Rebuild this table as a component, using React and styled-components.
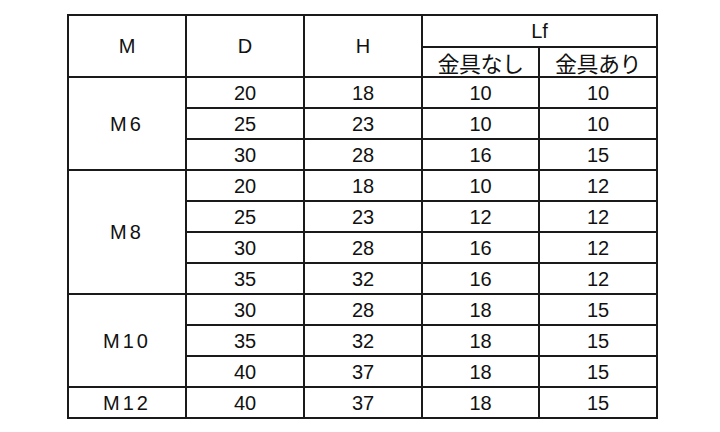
import React from "react";
import styled, { createGlobalStyle } from "styled-components";

const Global = createGlobalStyle`
  html, body {
    margin: 0;
    background: #fff;
  }
`;

const Page = styled.div`
  padding: 14px 0 0 67px;
`;

const Table = styled.table`
  border-collapse: collapse;
  table-layout: fixed;
  width: 591px;
  font-family: "Liberation Sans", "Noto Sans CJK JP", sans-serif;
  font-size: 20px;
  color: #111;
`;

const Cell = styled.td`
  border: 2px solid #1a1a1a;
  text-align: center;
  vertical-align: middle;
  padding: 0;
  height: ${(p) => p.$h || 29}px;
  line-height: 1;
  letter-spacing: ${(p) => (p.$wide ? "3px" : "0")};
`;

const SubHead = styled(Cell)`
  font-family: "Noto Sans CJK JP", sans-serif;
  font-size: 22px;
  letter-spacing: -0.5px;
`;

const groups = [
  { m: "M6", rows: [["20", "18", "10", "10"], ["25", "23", "10", "10"], ["30", "28", "16", "15"]] },
  { m: "M8", rows: [["20", "18", "10", "12"], ["25", "23", "12", "12"], ["30", "28", "16", "12"], ["35", "32", "16", "12"]] },
  { m: "M10", rows: [["30", "28", "18", "15"], ["35", "32", "18", "15"], ["40", "37", "18", "15"]] },
  { m: "M12", rows: [["40", "37", "18", "15"]] },
];

export default function App() {
  return (
    <Page>
      <Global />
      <Table>
        <colgroup>
          <col style={{ width: 118 }} />
          <col style={{ width: 118 }} />
          <col style={{ width: 118 }} />
          <col style={{ width: 117 }} />
          <col style={{ width: 118 }} />
        </colgroup>
        <tbody>
          <tr>
            <Cell rowSpan={2}>M</Cell>
            <Cell rowSpan={2}>D</Cell>
            <Cell rowSpan={2}>H</Cell>
            <Cell colSpan={2} $h={30}>Lf</Cell>
          </tr>
          <tr>
            <SubHead $h={28}>金具なし</SubHead>
            <SubHead $h={28}>金具あり</SubHead>
          </tr>
          {groups.map((g) =>
            g.rows.map((r, i) => (
              <tr key={g.m + i}>
                {i === 0 && (
                  <Cell rowSpan={g.rows.length} $wide>
                    {g.m}
                  </Cell>
                )}
                {r.map((v, j) => (
                  <Cell key={j}>{v}</Cell>
                ))}
              </tr>
            ))
          )}
        </tbody>
      </Table>
    </Page>
  );
}
